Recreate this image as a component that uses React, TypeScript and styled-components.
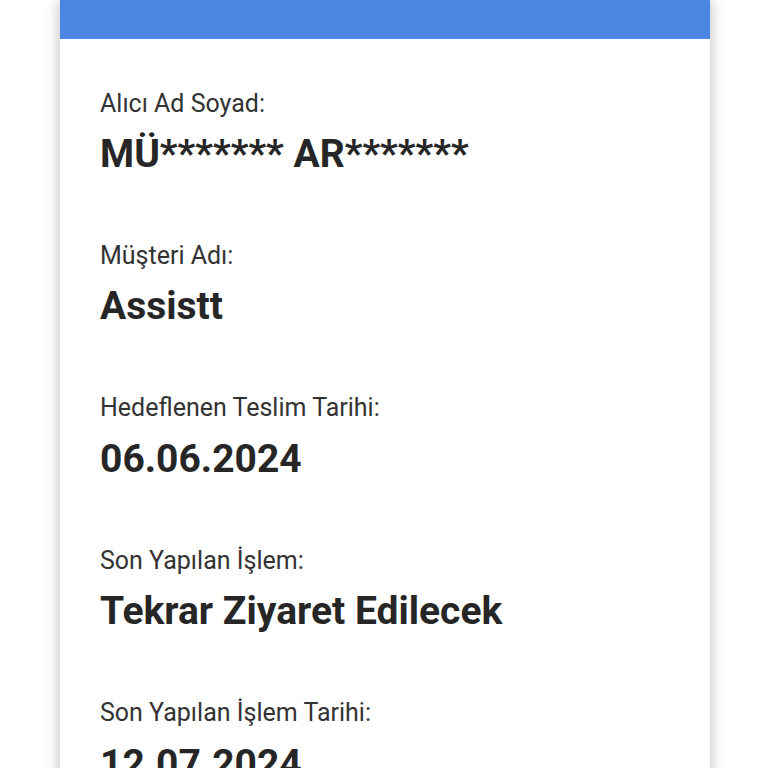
import React from "react";
import styled, { createGlobalStyle } from "styled-components";

const Global = createGlobalStyle`
  html, body { margin: 0; padding: 0; background: #ffffff; }
  body { font-family: Roboto, "Noto Sans", Arial, sans-serif; overflow: hidden; }
`;

const Page = styled.div`
  height: 768px;
  overflow: hidden;
  padding-left: 60px;
  background: #ffffff;
`;

const Card = styled.div`
  width: 650px;
  min-height: 900px;
  background: #ffffff;
  box-shadow: 0 0 14px rgba(0, 0, 0, 0.28);
`;

const Header = styled.div`
  height: 39px;
  background: #4a86e2;
`;

const Body = styled.div`
  padding: 49.5px 40px 0 40px;
  display: flex;
  flex-direction: column;
  gap: 64.3px;
`;

const Field = styled.div`
  display: flex;
  flex-direction: column;
  gap: 12.2px;
`;

const Label = styled.div`
  font-size: 25px;
  line-height: 30px;
  color: #333333;
`;

const Value = styled.div`
  font-size: 39px;
  line-height: 46px;
  font-weight: 700;
  color: #262626;
`;

const fields = [
  { label: "Alıcı Ad Soyad:", value: "MÜ******* AR*******" },
  { label: "Müşteri Adı:", value: "Assistt" },
  { label: "Hedeflenen Teslim Tarihi:", value: "06.06.2024" },
  { label: "Son Yapılan İşlem:", value: "Tekrar Ziyaret Edilecek" },
  { label: "Son Yapılan İşlem Tarihi:", value: "12.07.2024" },
];

export default function App() {
  return (
    <Page>
      <Global />
      <Card>
        <Header />
        <Body>
          {fields.map((f) => (
            <Field key={f.label}>
              <Label>{f.label}</Label>
              <Value>{f.value}</Value>
            </Field>
          ))}
        </Body>
      </Card>
    </Page>
  );
}
